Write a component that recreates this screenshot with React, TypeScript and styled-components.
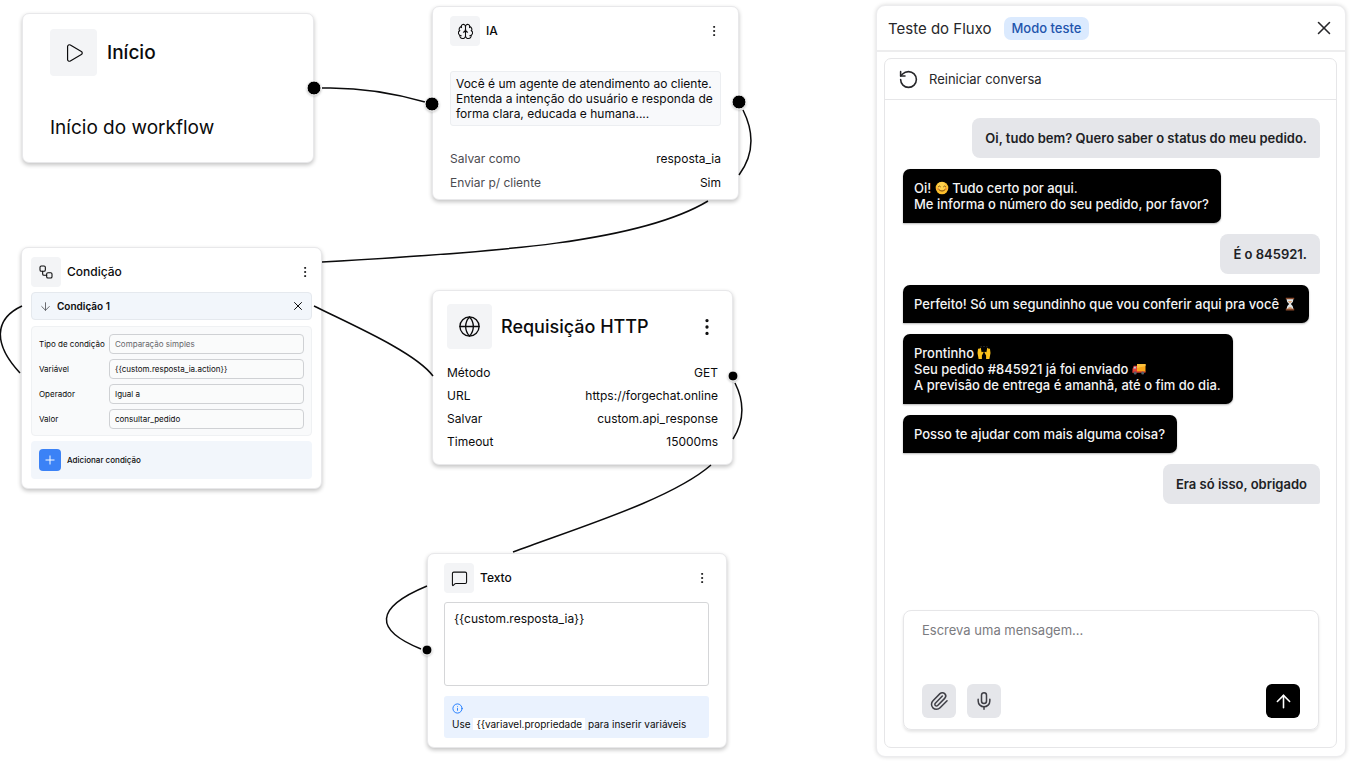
import React from "react";
import styled, { createGlobalStyle, css } from "styled-components";
import {
  ArrowDown,
  ArrowUp,
  Brain,
  EllipsisVertical,
  Globe,
  Info,
  MessageSquare,
  Mic,
  Paperclip,
  Play,
  Plus,
  RotateCcw,
  Workflow,
  X,
} from "lucide-react";

const GlobalStyle = createGlobalStyle`
  *, *::before, *::after { box-sizing: border-box; }
  body { margin: 0; background: #fff; }
  body, button, input, textarea { font-family: Inter, "Liberation Sans", sans-serif; }
  p, h1, h2, dl, dd { margin: 0; }
`;

const Page = styled.main`
  display: grid;
  grid-template-columns: minmax(760px, 1fr) 470px;
  min-height: 100vh;
  padding-right: 6px;
  color: #0b0b0c;
`;

/* ---------- Flow canvas ---------- */

const Canvas = styled.section`
  position: relative;
  min-height: 760px;
  overflow: hidden;
`;

const Connectors = styled.svg`
  position: absolute;
  inset: 0;
  width: 100%;
  height: 100%;
  pointer-events: none;
  fill: none;
  stroke: #0b0b0c;
  stroke-width: 1.5;

  circle {
    fill: #000;
    stroke: #fff;
    stroke-width: 1;
    filter: drop-shadow(0 1px 1px rgba(0, 0, 0, 0.2));
  }
`;

const Node = styled.article<{ $x: number; $y: number; $w: number; $pad: string }>`
  position: absolute;
  left: ${(p) => p.$x}px;
  top: ${(p) => p.$y}px;
  width: ${(p) => p.$w}px;
  padding: ${(p) => p.$pad};
  border: 1px solid #e8e8ea;
  border-radius: 7px;
  background: #fff;
  box-shadow: 0 2px 4px rgba(0, 0, 0, 0.24);
`;

const NodeHeader = styled.header<{ $gap?: number }>`
  display: flex;
  align-items: center;
  gap: ${(p) => p.$gap ?? 6}px;
`;

const IconTile = styled.span<{ $size?: number }>`
  display: grid;
  place-items: center;
  flex: none;
  width: ${(p) => p.$size ?? 30}px;
  height: ${(p) => p.$size ?? 30}px;
  border-radius: 4px;
  background: #f3f4f6;
`;

const NodeTitle = styled.h2<{ $size?: number }>`
  flex: 1;
  padding-bottom: 1px;
  font-size: ${(p) => p.$size ?? 12}px;
  font-weight: 500;
`;

const IconButton = styled.button`
  display: grid;
  place-items: center;
  padding: 0;
  border: 0;
  background: none;
  color: inherit;
`;

const StartText = styled.p`
  margin-top: 39px;
  font-size: 19px;
  line-height: 26px;
`;

const Prompt = styled.p`
  margin: 25px 0 20px;
  padding: 4px 5px;
  border: 1px solid #eceef1;
  border-radius: 3px;
  background: #f8f9fb;
  font-size: 12px;
  line-height: 15px;
`;

const Details = styled.dl<{ $row: number; $top?: number; $muted?: boolean }>`
  display: grid;
  grid-template-columns: auto 1fr;
  grid-auto-rows: ${(p) => p.$row}px;
  align-items: center;
  margin-top: ${(p) => p.$top ?? 0}px;
  font-size: 12px;

  dt { color: ${(p) => (p.$muted ? "#4b4b50" : "inherit")}; }
  dd { text-align: right; }
`;

const ConditionBar = styled.div`
  display: flex;
  align-items: center;
  gap: 5px;
  height: 28px;
  margin: 5px 0 6px;
  padding: 0 6px 0 7px;
  border: 1px solid #e5e9ee;
  border-radius: 4px;
  background: #f2f6fb;
  font-size: 10px;
  font-weight: 600;

  span { flex: 1; }
`;

const ConditionForm = styled.div`
  display: grid;
  grid-template-columns: 66px 1fr;
  gap: 5px 4px;
  align-items: center;
  padding: 7px 7px 6px;
  border: 1px solid #eff1f3;
  border-radius: 4px;
  background: #f9fafb;
  font-size: 8px;

  label { white-space: nowrap; }
`;

const Field = styled.input<{ $muted?: boolean }>`
  width: 100%;
  height: 20px;
  padding: 0 5px;
  border: 1px solid #cfd1d4;
  border-radius: 4px;
  background: #fafbfb;
  color: ${(p) => (p.$muted ? "#66676b" : "#0b0b0c")};
  font-size: 8px;
`;

const AddCondition = styled.button`
  display: flex;
  align-items: center;
  gap: 6px;
  width: 100%;
  height: 38px;
  margin-top: 5px;
  padding: 0 8px;
  border: 0;
  border-radius: 4px;
  background: #f2f6fb;
  color: inherit;
  font-size: 8px;
  font-weight: 500;
`;

const PlusTile = styled.span`
  display: grid;
  place-items: center;
  width: 22px;
  height: 22px;
  border-radius: 4px;
  background: #3b82f6;
  color: #fff;
`;

const MessageField = styled.textarea`
  display: block;
  width: 100%;
  height: 84px;
  margin: 9px 0 10px;
  padding: 8px 9px;
  border: 1px solid #d5d6d8;
  border-radius: 3px;
  resize: none;
  color: inherit;
  font-size: 12px;
  line-height: 16px;
`;

const Hint = styled.div`
  height: 42px;
  padding: 7px 8px;
  border-radius: 3px;
  background: #eaf2fe;
  font-size: 10px;
  line-height: 12px;

  svg { display: block; color: #1677ff; }
  p { margin-top: 4px; }
  code {
    padding: 0 3px;
    background: #fff;
    font-family: inherit;
    font-size: inherit;
  }
`;

/* ---------- Test chat ---------- */

const Panel = styled.aside`
  display: flex;
  flex-direction: column;
  margin: 5px 0;
  border: 1px solid #ececee;
  border-radius: 9px;
  background: #fff;
  box-shadow: 0 0 4px rgba(0, 0, 0, 0.16);
`;

const PanelHeader = styled.header`
  display: flex;
  align-items: center;
  gap: 12px;
  height: 46px;
  padding: 0 10px 0 11px;
  border-bottom: 2px solid #ededee;
  color: #27272a;
`;

const PanelTitle = styled.h1`
  font-size: 15px;
  font-weight: 400;
`;

const ModeBadge = styled.span`
  padding: 2px 8px;
  border-radius: 7px;
  background: #dbeafe;
  color: #1f55ad;
  font-size: 13px;
  font-weight: 500;
  line-height: 19px;
`;

const CloseButton = styled(IconButton)`
  margin-left: auto;
`;

const Conversation = styled.div`
  display: flex;
  flex: 1;
  flex-direction: column;
  margin: 6px 8px 8px 7px;
  border: 1px solid #e6e6e8;
  border-radius: 7px;
`;

const RestartButton = styled.button`
  display: flex;
  align-items: center;
  gap: 10px;
  height: 41px;
  padding: 0 13px;
  border: 0;
  border-bottom: 1px solid #e6e6e8;
  background: none;
  color: #27272a;
  font-size: 13px;
`;

const Messages = styled.div`
  display: flex;
  flex: 1;
  flex-direction: column;
  gap: 11px;
  padding: 18px 16px 18px 18px;
`;

const Bubble = styled.p<{ $user?: boolean }>`
  font-size: 13px;
  line-height: 16px;
  white-space: pre-line;

  ${(p) =>
    p.$user
      ? css`
          align-self: flex-end;
          padding: 12px 13px;
          border-radius: 8px 8px 2px 8px;
          background: #e5e6ea;
          color: #202124;
          font-weight: 600;
        `
      : css`
          align-self: flex-start;
          padding: 11px 12px 11px 11px;
          border-radius: 7px 7px 7px 0;
          background: #000;
          color: #f4f4f5;
          font-weight: 500;
          box-shadow: 0 1px 2px rgba(0, 0, 0, 0.3);
        `}
`;

const Emoji = styled.svg`
  width: 14px;
  height: 14px;
  vertical-align: -2px;
`;

const Composer = styled.form`
  margin: 0 17px 17px 18px;
  padding: 10px 18px 11px;
  border: 1px solid #e6e6e8;
  border-radius: 8px;
  box-shadow: 0 2px 3px rgba(0, 0, 0, 0.1);
`;

const ComposerInput = styled.textarea`
  display: block;
  width: 100%;
  height: 63px;
  padding: 0;
  border: 0;
  outline: 0;
  resize: none;
  background: none;
  font-size: 13px;
  line-height: 18px;

  &::placeholder { color: #7b7b7f; }
`;

const ComposerActions = styled.div`
  display: flex;
  gap: 11px;
`;

const ActionButton = styled.button<{ $primary?: boolean }>`
  display: grid;
  place-items: center;
  width: 34px;
  height: 34px;
  padding: 0;
  border: 0;
  border-radius: 6px;
  background: ${(p) => (p.$primary ? "#000" : "#e5e6ea")};
  color: ${(p) => (p.$primary ? "#fff" : "#3f3f46")};
  margin-left: ${(p) => (p.$primary ? "auto" : "0")};
`;

const Smile = () => (
  <Emoji viewBox="0 0 14 14" role="img" aria-label="sorriso">
    <circle cx="7" cy="7" r="6.3" fill="#fdbf2d" />
    <circle cx="6.5" cy="5" r="4" fill="#ffd95a" opacity=".7" />
    <path d="M3.4 5.6q1-1.4 2 0M8.6 5.6q1-1.4 2 0M3.6 8.4q3.4 3.600 6.800 0" fill="none" stroke="#7a4a12" strokeLinecap="round" />
    <circle cx="2.9" cy="7.9" r="1.2" fill="#f4873c" opacity=".6" />
    <circle cx="11.1" cy="7.9" r="1.2" fill="#f4873c" opacity=".6" />
  </Emoji>
);

const Hourglass = () => (
  <Emoji viewBox="0 0 14 14" role="img" aria-label="ampulheta">
    <path d="M3.5 2h7q0 3-2.6 5 2.6 2 2.6 5h-7q0-3 2.6-5-2.6-2-2.6-5z" fill="#dfe7ea" />
    <path d="M4.6 4h4.800L7 6.600zM4.300 12Q7 7.600 9.700 12z" fill="#d9a67c" />
    <path d="M2.800 1.500h8.400M2.800 12.600h8.400" stroke="#8a4a2c" strokeWidth="1.6" />
  </Emoji>
);

const Hands = () => (
  <Emoji viewBox="0 0 14 14" role="img" aria-label="mãos para cima">
    <path d="M1 3.2q.6-1.2 1.3 0l.3-1q.9-.8 1.300.3l.7 3.800 1.400-.6q.9.2.4 1L4.900 9.400V13H1.600L.5 7z" fill="#fcc21b" />
    <path d="M13 3.2q-.6-1.2-1.3 0l-.3-1q-.9-.8-1.300.3l-.7 3.800-1.400-.6q-.9.2-.4 1l1.500 2.700V13h3.300L13.500 7z" fill="#fcc21b" />
    <path d="M4.500 1.200 4 .3M7 1V0M9.500 1.200l.5-.9" stroke="#55565a" strokeWidth=".8" />
  </Emoji>
);

const Truck = () => (
  <Emoji viewBox="0 0 14 14" role="img" aria-label="caminhão">
    <path d="M5 2h8.5v8H5z" fill="#faa61a" />
    <path d="M5 2h8.5v2L5 6z" fill="#fdc13c" />
    <path d="M.5 10.5V7l1.2-3.2H5v6.7z" fill="#e2403a" />
    <path d="M1.5 6.6l.8-1.9h1.500v1.900z" fill="#a9d8f2" />
    <path d="M.5 9.4h13v1.400H.5z" fill="#c5322c" />
    <circle cx="3.2" cy="11" r="1.5" fill="#57606a" />
    <circle cx="10.7" cy="11" r="1.5" fill="#57606a" />
  </Emoji>
);

const conditionFields = [
  { id: "tipo", label: "Tipo de condição", value: "Comparação simples", muted: true },
  { id: "variavel", label: "Variável", value: "{{custom.resposta_ia.action}}" },
  { id: "operador", label: "Operador", value: "Igual a" },
  { id: "valor", label: "Valor", value: "consultar_pedido" },
];

const requestDetails = [
  ["Método", "GET"],
  ["URL", "https://forgechat.online"],
  ["Salvar", "custom.api_response"],
  ["Timeout", "15000ms"],
];

const MenuButton = ({ size = 14 }: { size?: number }) => (
  <IconButton type="button" aria-label="Mais opções">
    <EllipsisVertical size={size} strokeWidth={1.6} />
  </IconButton>
);

export default function App() {
  return (
    <Page>
      <GlobalStyle />
      <Canvas aria-label="Fluxo">
        <Node $x={22} $y={13} $w={292} $pad="15px 27px 21px">
          <NodeHeader $gap={10}>
            <IconTile $size={47}><Play size={22} strokeWidth={1.3} /></IconTile>
            <NodeTitle $size={19}>Início</NodeTitle>
          </NodeHeader>
          <StartText>Início do workflow</StartText>
        </Node>

        <Node $x={432} $y={6} $w={307} $pad="9px 17px 5px">
          <NodeHeader>
            <IconTile><Brain size={17} strokeWidth={1.5} /></IconTile>
            <NodeTitle>IA</NodeTitle>
            <MenuButton />
          </NodeHeader>
          <Prompt>
            Você é um agente de atendimento ao cliente. Entenda a intenção do usuário e responda de forma clara, educada e humana....
          </Prompt>
          <Details $row={24} $muted>
            <dt>Salvar como</dt>
            <dd>resposta_ia</dd>
            <dt>Enviar p/ cliente</dt>
            <dd>Sim</dd>
          </Details>
        </Node>

        <Node $x={21} $y={247} $w={301} $pad="9px">
          <NodeHeader>
            <IconTile><Workflow size={16} strokeWidth={1.6} /></IconTile>
            <NodeTitle>Condição</NodeTitle>
            <MenuButton />
          </NodeHeader>
          <ConditionBar>
            <ArrowDown size={13} strokeWidth={1.6} color="#55565a" />
            <span>Condição 1</span>
            <IconButton type="button" aria-label="Remover condição">
              <X size={14} strokeWidth={1.7} />
            </IconButton>
          </ConditionBar>
          <ConditionForm>
            {conditionFields.map((f) => (
              <React.Fragment key={f.id}>
                <label htmlFor={f.id}>{f.label}</label>
                <Field id={f.id} defaultValue={f.value} $muted={f.muted} />
              </React.Fragment>
            ))}
          </ConditionForm>
          <AddCondition type="button">
            <PlusTile><Plus size={14} strokeWidth={1.7} /></PlusTile>
            Adicionar condição
          </AddCondition>
        </Node>

        <Node $x={432} $y={290} $w={301} $pad="13px 14px 11px">
          <NodeHeader $gap={9}>
            <IconTile $size={45}><Globe size={23} strokeWidth={1.4} /></IconTile>
            <NodeTitle $size={18}>Requisição HTTP</NodeTitle>
            <MenuButton size={22} />
          </NodeHeader>
          <Details $row={23} $top={12}>
            {requestDetails.map(([term, value]) => (
              <React.Fragment key={term}>
                <dt>{term}</dt>
                <dd>{value}</dd>
              </React.Fragment>
            ))}
          </Details>
        </Node>

        <Node $x={427} $y={553} $w={300} $pad="9px 17px 9px 16px">
          <NodeHeader>
            <IconTile><MessageSquare size={17} strokeWidth={1.5} /></IconTile>
            <NodeTitle>Texto</NodeTitle>
            <MenuButton />
          </NodeHeader>
          <MessageField aria-label="Texto da mensagem" defaultValue="{{custom.resposta_ia}}" />
          <Hint>
            <Info size={11} />
            <p>
              Use <code>{"{{variavel.propriedade"}</code> para inserir variáveis
            </p>
          </Hint>
        </Node>

        <Connectors aria-hidden="true">
          <path d="M322 88C358 87 394 93 425 102" />
          <path d="M743 110C755 134 753 156 739 175M708 201C640 242 500 252 322 262" />
          <path d="M22 306C-6 319-7 344 20 373" />
          <path d="M314 306C350 324 415 352 433 376" />
          <path d="M735 383C744 401 745 420 733 439M711 465C672 499 580 527 513 552" />
          <path d="M427 586C374 608 374 630 421 649" />
          <circle cx="314" cy="88" r="7" />
          <circle cx="432" cy="104" r="7" />
          <circle cx="739" cy="102" r="7" />
          <circle cx="733" cy="376" r="5" />
          <circle cx="427" cy="650" r="5" />
        </Connectors>
      </Canvas>

      <Panel>
        <PanelHeader>
          <PanelTitle>Teste do Fluxo</PanelTitle>
          <ModeBadge>Modo teste</ModeBadge>
          <CloseButton type="button" aria-label="Fechar"><X size={22} strokeWidth={1.7} /></CloseButton>
        </PanelHeader>
        <Conversation>
          <RestartButton type="button">
            <RotateCcw size={21} strokeWidth={1.8} />
            Reiniciar conversa
          </RestartButton>
          <Messages>
            <Bubble $user>Oi, tudo bem? Quero saber o status do meu pedido.</Bubble>
            <Bubble>
              Oi! <Smile /> Tudo certo por aqui.{"\n"}Me informa o número do seu pedido, por favor?
            </Bubble>
            <Bubble $user>É o 845921.</Bubble>
            <Bubble>
              Perfeito! Só um segundinho que vou conferir aqui pra você <Hourglass />
            </Bubble>
            <Bubble>
              Prontinho <Hands />{"\n"}Seu pedido #845921 já foi enviado <Truck />{"\n"}A previsão de entrega é amanhã, até o fim do dia.
            </Bubble>
            <Bubble>Posso te ajudar com mais alguma coisa?</Bubble>
            <Bubble $user>Era só isso, obrigado</Bubble>
          </Messages>
          <Composer onSubmit={(e) => e.preventDefault()}>
            <ComposerInput aria-label="Mensagem" placeholder="Escreva uma mensagem..." />
            <ComposerActions>
              <ActionButton type="button" aria-label="Anexar arquivo"><Paperclip size={20} strokeWidth={1.8} /></ActionButton>
              <ActionButton type="button" aria-label="Gravar áudio"><Mic size={20} strokeWidth={1.8} /></ActionButton>
              <ActionButton type="submit" $primary aria-label="Enviar"><ArrowUp size={21} strokeWidth={1.8} /></ActionButton>
            </ComposerActions>
          </Composer>
        </Conversation>
      </Panel>
    </Page>
  );
}
